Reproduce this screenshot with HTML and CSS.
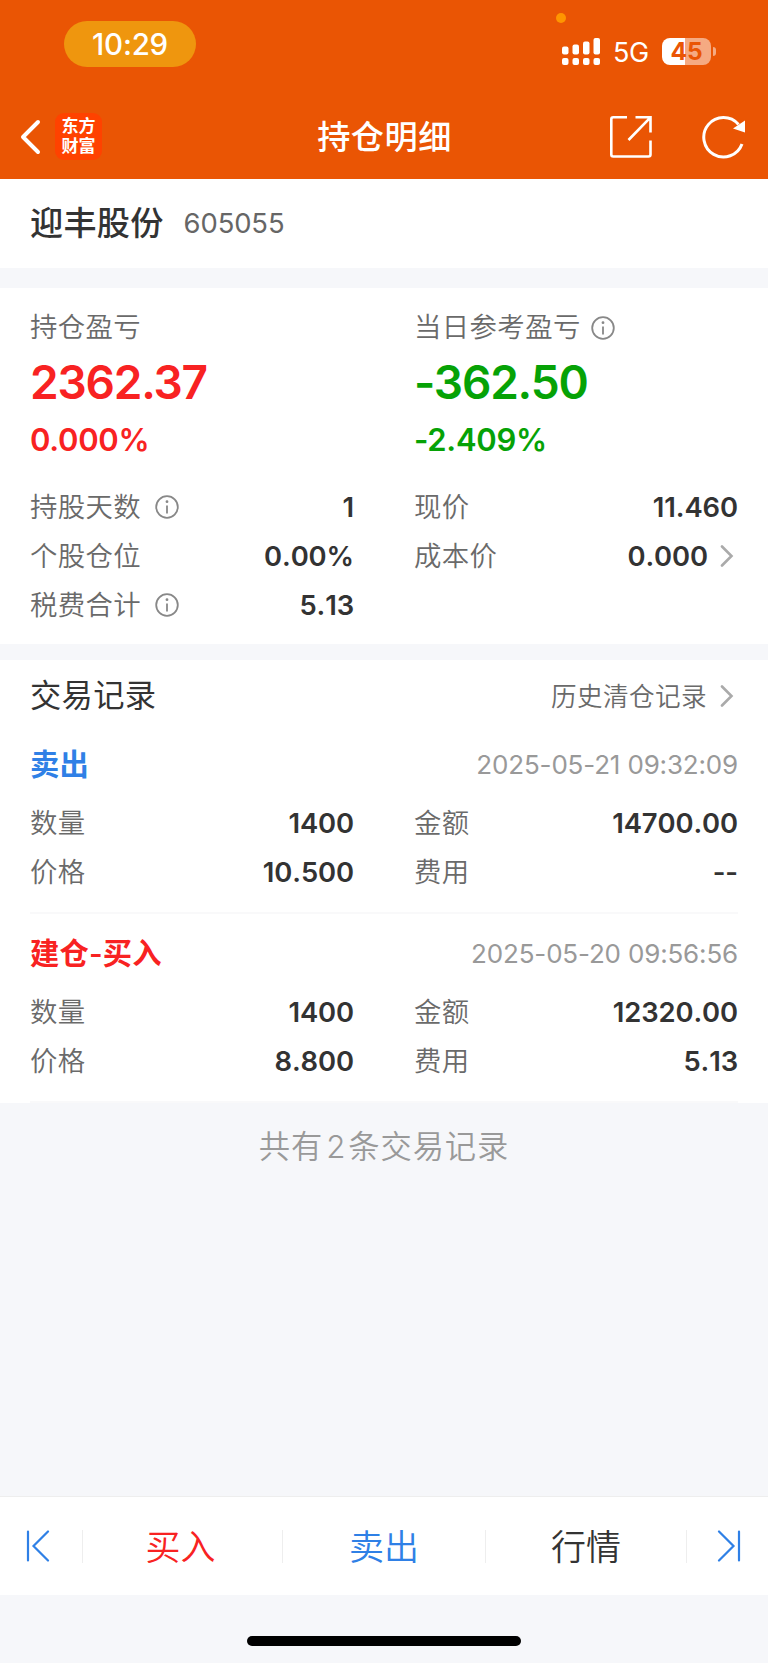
FILE: index.html
```html
<!DOCTYPE html>
<html lang="zh-CN">
<head>
  <meta charset="UTF-8">
  <meta name="viewport" content="width=device-width, initial-scale=1.0">
  <title>持仓明细</title>
  <link rel="stylesheet" href="styles.css">
</head>
<body>

<header class="top">
  <div class="status">
    <span class="dot"></span>
    <span class="time">10:29</span>
    <div class="status-right">
      <svg class="signal" width="39" height="28" viewBox="0 0 39 28" fill="#fff">
        <rect x="0" y="8.5" width="6.5" height="8" rx="2"/>
        <rect x="10.5" y="6.5" width="6.5" height="10" rx="2"/>
        <rect x="21" y="3.5" width="6.5" height="13" rx="2"/>
        <rect x="31.5" y="0" width="6.5" height="16.5" rx="2"/>
        <rect x="0" y="20" width="6.5" height="7" rx="2"/>
        <rect x="10.5" y="20" width="6.5" height="7" rx="2"/>
        <rect x="21" y="20" width="6.5" height="7" rx="2"/>
        <rect x="31.5" y="20" width="6.5" height="7" rx="2"/>
      </svg>
      <span class="net">5G</span>
      <span class="battery">45</span>
      <span class="battery-tip"></span>
    </div>
  </div>
  <nav class="navbar">
    <div class="nav-left">
      <svg width="21" height="36" viewBox="0 0 21 36" fill="none" stroke="#fff" stroke-width="4" stroke-linecap="round" stroke-linejoin="round"><path d="M18 3 3 18 18 33"/></svg>
      <span class="logo">东方<br>财富</span>
    </div>
    <h1>持仓明细</h1>
    <div class="nav-right">
      <svg width="44" height="44" viewBox="0 0 44 44" fill="none" stroke="#fff" stroke-width="2.6">
        <path d="M18 2.3H4.3a2 2 0 0 0-2 2V39.5a2 2 0 0 0 2 2H39.5a2 2 0 0 0 2-2V25.5"/>
        <path d="M26.5 2.3H41.5V17.5M41 2.8 19.5 25"/>
      </svg>
      <svg width="46" height="44" viewBox="0 0 46 44" fill="none" stroke="#fff" stroke-width="3">
        <path d="M40 29A19.7 19.7 0 1 1 36.5 9.5"/>
        <path d="M43 5.5V17.5L31 13.5Z" fill="#fff" stroke="none"/>
      </svg>
    </div>
  </nav>
</header>

<main>
  <section class="stock">
    <h2>迎丰股份</h2>
    <span>605055</span>
  </section>

  <section class="position">
    <div class="cols">
      <div class="profit red">
        <p class="label">持仓盈亏</p>
        <p class="big">2362.37</p>
        <p class="rate">0.000%</p>
      </div>
      <div class="profit green">
        <p class="label">当日参考盈亏<svg class="info" viewBox="0 0 24 24"><circle cx="12" cy="12" r="10.8"/><path d="M12 10.5V18.5"/><circle class="pt" cx="12" cy="6.7" r="1.4"/></svg></p>
        <p class="big">-362.50</p>
        <p class="rate">-2.409%</p>
      </div>
    </div>
    <div class="cols">
      <div>
        <div class="row"><span class="label">持股天数<svg class="info far" viewBox="0 0 24 24"><circle cx="12" cy="12" r="10.8"/><path d="M12 10.5V18.5"/><circle class="pt" cx="12" cy="6.7" r="1.4"/></svg></span><b>1</b></div>
        <div class="row"><span class="label">个股仓位</span><b>0.00%</b></div>
        <div class="row"><span class="label">税费合计<svg class="info far" viewBox="0 0 24 24"><circle cx="12" cy="12" r="10.8"/><path d="M12 10.5V18.5"/><circle class="pt" cx="12" cy="6.7" r="1.4"/></svg></span><b>5.13</b></div>
      </div>
      <div>
        <div class="row"><span class="label">现价</span><b>11.460</b></div>
        <div class="row"><span class="label">成本价</span><b class="more">0.000<svg class="arrow" viewBox="0 0 14 22"><path d="M2 1.5 11.5 11 2 20.5"/></svg></b></div>
      </div>
    </div>
  </section>

  <section class="records">
    <div class="records-head">
      <h3>交易记录</h3>
      <a class="history"><span>历史清仓记录</span><svg class="arrow" viewBox="0 0 14 22"><path d="M2 1.5 11.5 11 2 20.5"/></svg></a>
    </div>

    <article class="record">
      <div class="record-title"><strong class="blue">卖出</strong><time>2025-05-21 09:32:09</time></div>
      <div class="cols">
        <div>
          <div class="row"><span class="label">数量</span><b>1400</b></div>
          <div class="row"><span class="label">价格</span><b>10.500</b></div>
        </div>
        <div>
          <div class="row"><span class="label">金额</span><b>14700.00</b></div>
          <div class="row"><span class="label">费用</span><b>--</b></div>
        </div>
      </div>
    </article>

    <article class="record">
      <div class="record-title"><strong class="red">建仓-买入</strong><time>2025-05-20 09:56:56</time></div>
      <div class="cols">
        <div>
          <div class="row"><span class="label">数量</span><b>1400</b></div>
          <div class="row"><span class="label">价格</span><b>8.800</b></div>
        </div>
        <div>
          <div class="row"><span class="label">金额</span><b>12320.00</b></div>
          <div class="row"><span class="label">费用</span><b>5.13</b></div>
        </div>
      </div>
    </article>
  </section>

  <p class="total">共有<span>2</span>条交易记录</p>
</main>

<footer class="tabs">
  <a class="edge prev"><svg width="24" height="32" viewBox="0 0 24 32"><path d="M2 1.5V30.5M22 1.5 7.5 16 22 30.5"/></svg></a>
  <a class="red">买入</a>
  <a class="blue">卖出</a>
  <a>行情</a>
  <a class="edge next"><svg width="24" height="32" viewBox="0 0 24 32"><path d="M22 1.5V30.5M2 1.5 16.5 16 2 30.5"/></svg></a>
</footer>
<div class="home"><span></span></div>

</body>
</html>
```

FILE: styles.css
```css
* {
  box-sizing: border-box;
}

body {
  margin: 0;
  height: 1663px;
  display: flex;
  flex-direction: column;
  background: #f6f7fa;
  color: #333;
  font-family: Inter, "Noto Sans CJK SC", sans-serif;
  font-size: 27.4px;
}

h1, h2, h3, p {
  margin: 0;
}

main {
  flex: 1;
}

.red { color: #f82222; }
.green { color: #06a206; }
.blue { color: #2f80e6; }

/* header */
.top {
  height: 179px;
  background: #ea5504;
  color: #fff;
}

.status {
  position: relative;
  height: 94px;
  padding: 21px 52px 0 64px;
  display: flex;
  justify-content: space-between;
  align-items: flex-start;
}

.dot {
  position: absolute;
  left: 556px;
  top: 13px;
  width: 10px;
  height: 10px;
  border-radius: 50%;
  background: #ff9500;
}

.time {
  width: 132px;
  height: 46px;
  border-radius: 23px;
  background: #ef960e;
  font-size: 29.5px;
  font-weight: 500;
  line-height: 46px;
  letter-spacing: -0.2px;
  text-align: center;
}

.status-right {
  display: flex;
  align-items: center;
  height: 28px;
  margin-top: 16px;
}

.signal {
  margin-top: 1px;
}

.net {
  width: 36px;
  margin: 0 13px 0 12px;
  padding-top: 3px;
  font-size: 27px;
  line-height: 28px;
  letter-spacing: -0.3px;
}

.battery {
  width: 49px;
  height: 27px;
  border-radius: 8px;
  background: linear-gradient(to right, #fff 23px, #f5aa82 23px);
  color: #ea5504;
  font-size: 24.5px;
  font-weight: 700;
  line-height: 27px;
  text-align: center;
}

.battery-tip {
  width: 3.5px;
  height: 9px;
  margin-left: 1.5px;
  border-radius: 0 4px 4px 0;
  background: #f5aa82;
}

.navbar {
  height: 85px;
  padding: 0 20px 0 20px;
  display: grid;
  grid-template-columns: 1fr auto 1fr;
  align-items: center;
}

.nav-left {
  display: flex;
  align-items: center;
  gap: 14px;
}

.logo {
  width: 47px;
  height: 47px;
  padding-top: 4px;
  border-radius: 9px;
  background: #ff4200;
  font-size: 17px;
  font-weight: 700;
  line-height: 19.5px;
  text-align: center;
}

.navbar h1 {
  padding-left: 1px;
  font-size: 33.2px;
  font-weight: 500;
  line-height: 40px;
  letter-spacing: 0.5px;
}

.nav-right {
  display: flex;
  justify-content: flex-end;
  gap: 49px;
}

/* stock name */
.stock {
  height: 89px;
  padding: 0 30px 1px;
  display: flex;
  align-items: center;
  background: #fff;
}

.stock h2 {
  margin-right: 20px;
  font-size: 33.2px;
  font-weight: 500;
  line-height: 40px;
  letter-spacing: 0.2px;
}

.stock span {
  color: #666;
  letter-spacing: -0.1px;
}

/* position */
.position {
  height: 356px;
  margin-top: 20px;
  padding: 20px 30px 0;
  background: #fff;
}

.cols {
  display: grid;
  grid-template-columns: 1fr 1fr;
  gap: 60px;
}

.label {
  display: flex;
  align-items: center;
  color: #6a6a6a;
  font-size: 27.4px;
  font-weight: 350;
  line-height: 40px;
  letter-spacing: 0.4px;
}

.profit .label {
  padding-bottom: 1px;
  line-height: 39px;
}

.profit .big {
  font-size: 46px;
  font-weight: 600;
  line-height: 68px;
  letter-spacing: -1.2px;
}

.profit .rate {
  margin-bottom: 18px;
  font-size: 31px;
  font-weight: 600;
  line-height: 48px;
  letter-spacing: -0.3px;
}

.info {
  width: 24px;
  height: 24px;
  margin-left: 10px;
  fill: none;
  stroke: #888;
  stroke-width: 1.8;
}

.info.far {
  margin-left: 14px;
}

.info .pt {
  fill: #888;
  stroke: none;
}

.row {
  display: flex;
  justify-content: space-between;
  align-items: center;
  height: 49.2px;
}

.row b {
  font-weight: 600;
  font-kerning: none;
  letter-spacing: -0.1px;
}

.more,
.history {
  display: flex;
  align-items: center;
}

.arrow {
  width: 14px;
  height: 22px;
  margin: 0 4px 0 12px;
  fill: none;
  stroke: #aaa;
  stroke-width: 2.6;
  stroke-linecap: round;
}

/* trade records */
.records {
  margin-top: 16px;
  padding: 0 30px;
  background: #fff;
}

.records-head {
  display: flex;
  justify-content: space-between;
  align-items: center;
  height: 71px;
}

.records-head h3 {
  font-size: 31.3px;
  font-weight: 400;
  line-height: 40px;
  letter-spacing: 0.3px;
}

.history {
  color: #6a6a6a;
  font-size: 25.6px;
  font-weight: 350;
  letter-spacing: 0.4px;
}

.history .arrow {
  margin-left: 13px;
}

.history span {
  padding-bottom: 3px;
}

.record {
  height: 189px;
  border-bottom: 2px solid #f9f9fa;
}

.record:first-of-type {
  height: 183px;
}

.record + .record {
  padding-top: 6px;
}

.record-title {
  display: flex;
  justify-content: space-between;
  align-items: center;
  height: 67px;
}

.record-title strong {
  padding-bottom: 6px;
  font-size: 29.3px;
  font-weight: 600;
  letter-spacing: 0.2px;
}

.record-title time {
  color: #999;
  font-size: 26px;
  letter-spacing: -0.17px;
}

.total {
  padding-top: 24px;
  color: #999;
  font-size: 31.3px;
  font-weight: 350;
  line-height: 40px;
  letter-spacing: 0.9px;
  text-align: center;
}

.total span {
  margin: 0 2px 0 3px;
}

/* bottom tabs */
.tabs {
  display: grid;
  grid-template-columns: 83px 200px 203px 201px 81px;
  align-items: center;
  height: 99px;
  border-top: 1px solid #eee;
  background: #fff;
}

.tabs a {
  display: flex;
  justify-content: center;
  align-items: center;
  height: 33px;
  padding: 0 0 4px;
  border-right: 1px solid #eee;
  font-size: 35px;
  font-weight: 350;
}

.tabs a:nth-child(2) {
  padding-right: 4px;
}

.tabs .edge {
  padding: 0 6px 0 0;
}

.tabs .next {
  padding: 0 0 0 3px;
  border-right: none;
}

.edge svg {
  fill: none;
  stroke: #2f80e6;
  stroke-width: 2.2;
  stroke-linecap: round;
}

.home {
  height: 68px;
  padding-top: 41px;
}

.home span {
  display: block;
  width: 274px;
  height: 10px;
  margin: 0 auto;
  border-radius: 5px;
  background: #000;
}
```
